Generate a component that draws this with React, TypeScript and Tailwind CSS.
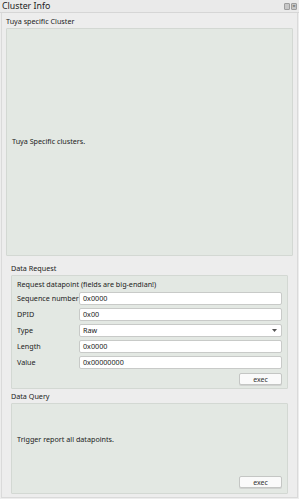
import React from 'react';

const rows: { label: string; value: string; select?: boolean }[] = [
  { label: 'Sequence number', value: '0x0000' },
  { label: 'DPID', value: '0x00' },
  { label: 'Type', value: 'Raw', select: true },
  { label: 'Length', value: '0x0000' },
  { label: 'Value', value: '0x00000000' },
];

const ExecButton: React.FC = () => (
  <button className="w-[43px] h-[12px] bg-[#fafafa] border border-[#c4c6c4] rounded-[2px] text-[7px] leading-none text-[#333] shadow-[0_1px_0_#d0d2d0]">
    exec
  </button>
);

const App: React.FC = () => {
  return (
    <div
      className="w-[299px] h-[499px] bg-[#ededed] text-[#222] flex flex-col overflow-hidden"
      style={{ fontFamily: '"Noto Sans", "Open Sans", sans-serif' }}
    >
      {/* title bar */}
      <div className="h-[13px] flex items-center justify-between pl-[2px] pr-[2px] border-b border-[#d6d6d6] bg-[#eaeaea]">
        <span className="text-[8.8px] leading-none">Cluster Info</span>
        <div className="flex gap-[1px]">
          <span className="w-[6px] h-[7px] bg-[#c7c7c7] border border-[#9d9d9d] rounded-[1px]" />
          <span className="w-[6px] h-[7px] bg-[#c7c7c7] border border-[#9d9d9d] rounded-[1px] flex items-center justify-center text-[6px] leading-none text-[#555]">×</span>
        </div>
      </div>

      <div className="flex-1 flex flex-col border-l border-r border-b border-[#dadada] ml-[1px] mr-[1px] mb-[1px]">
        {/* Tuya specific cluster */}
        <div className="px-[4px] pt-[3px]">
          <div className="text-[7.2px] leading-[11px] h-[11px] whitespace-nowrap">Tuya specific Cluster</div>
          <div className="mt-[1px] h-[228px] bg-[#e3e8e3] border border-[#d3d8d3] rounded-[1px] flex items-center pl-[5px]">
            <span className="text-[7.2px] leading-none">Tuya Specific clusters.</span>
          </div>
        </div>

        <div className="px-[9px] pt-[7px] flex flex-col">
          {/* Data Request */}
          <div className="text-[7.2px] leading-[11px] h-[11px]">Data Request</div>
          <div className="mt-[1px] h-[114px] bg-[#e3e8e3] border border-[#d3d8d3] rounded-[1px] px-[5px] pt-[3px] flex flex-col">
            <div className="text-[7.2px] leading-[11px] h-[11px] whitespace-nowrap">Request datapoint (fields are big-endian!)</div>
            <div className="mt-[2px] flex flex-col gap-[3px]">
              {rows.map(r => (
                <div key={r.label} className="flex items-center h-[13px]">
                  <span className="w-[62px] shrink-0 text-[7.2px] leading-none whitespace-nowrap">{r.label}</span>
                  <div className="flex-1 h-[13px] bg-white border border-[#c8cac8] rounded-[2px] flex items-center justify-between pl-[3px] pr-[4px]">
                    <span className="text-[7.2px] leading-none">{r.value}</span>
                    {r.select && (
                      <svg width="5" height="3" viewBox="0 0 5 3">
                        <path d="M0 0 L5 0 L2.5 3 Z" fill="#555" />
                      </svg>
                    )}
                  </div>
                </div>
              ))}
            </div>
            <div className="mt-[4px] flex justify-end">
              <ExecButton />
            </div>
          </div>

          {/* Data Query */}
          <div className="mt-[2px] text-[7.2px] leading-[11px] h-[11px]">Data Query</div>
          <div className="mt-[1px] h-[91px] bg-[#e3e8e3] border border-[#d3d8d3] rounded-[1px] px-[5px] flex flex-col">
            <div className="flex-1 flex items-center">
              <span className="text-[7.2px] leading-none">Trigger report all datapoints.</span>
            </div>
            <div className="pb-[5px] flex justify-end">
              <ExecButton />
            </div>
          </div>
        </div>
      </div>
    </div>
  );
};

export default App;
